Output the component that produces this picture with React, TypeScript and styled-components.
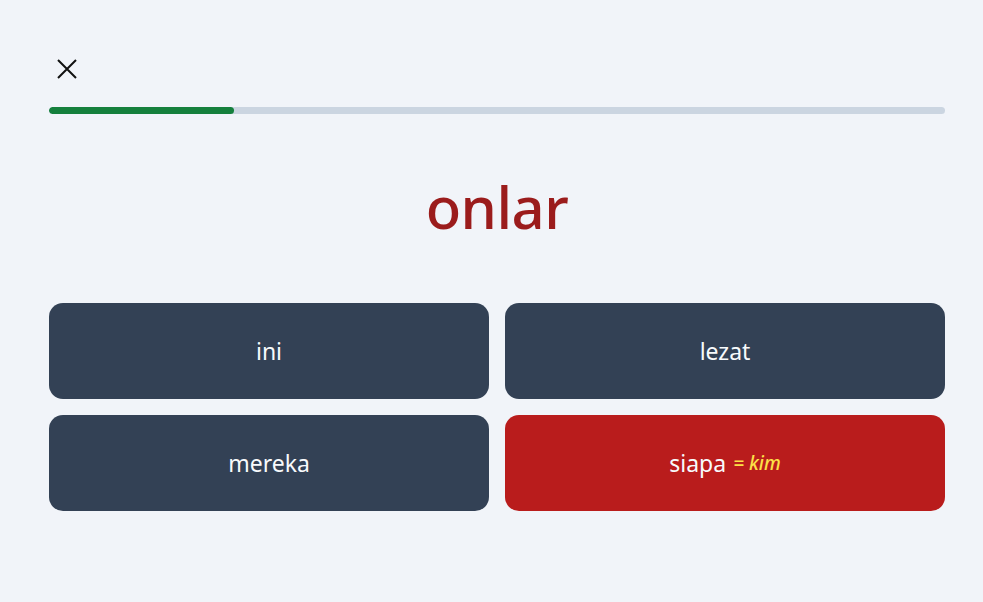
import React from "react";
import styled, { createGlobalStyle } from "styled-components";

const GlobalStyle = createGlobalStyle`
  html, body {
    margin: 0;
    padding: 0;
    background: #f1f4f9;
  }
  body {
    font-family: "Noto Sans", "Open Sans", sans-serif;
  }
`;

const Page = styled.main`
  width: 896px;
  padding: 51px 0 0 49px;
  box-sizing: content-box;
`;

const Header = styled.header`
  display: flex;
  align-items: center;
  height: 36px;
`;

const CloseButton = styled.button`
  width: 36px;
  height: 36px;
  padding: 0;
  border: none;
  background: transparent;
  display: flex;
  align-items: center;
  justify-content: center;
  cursor: pointer;
`;

const Track = styled.div`
  margin-top: 20px;
  height: 7px;
  border-radius: 4px;
  background: #cbd5e1;
  overflow: hidden;
`;

const Fill = styled.div`
  height: 100%;
  border-radius: 4px;
  background: #15803d;
`;

const Word = styled.h1`
  margin: 0;
  height: 189px;
  padding-bottom: 5px;
  box-sizing: border-box;
  display: flex;
  align-items: center;
  justify-content: center;
  font-size: 58px;
  font-weight: 500;
  color: #9b1c1c;
  letter-spacing: -0.5px;
`;

const Options = styled.div`
  display: grid;
  grid-template-columns: 1fr 1fr;
  gap: 16px;
`;

const Option = styled.button<{ $wrong?: boolean }>`
  height: 96px;
  border: none;
  border-radius: 14px;
  background: ${(p) => (p.$wrong ? "#b91c1c" : "#334155")};
  color: #f8fafc;
  font-family: inherit;
  font-size: 23px;
  display: flex;
  align-items: center;
  justify-content: center;
  gap: 7px;
  cursor: pointer;
`;

const Answer = styled.span`
  color: #fde047;
  font-style: italic;
  font-weight: 500;
  font-size: 19px;
`;

const options = [
  { label: "ini" },
  { label: "lezat" },
  { label: "mereka" },
  { label: "siapa", wrong: true, answer: "= kim" },
];

export default function App() {
  const progress = 185 / 896;
  return (
    <>
      <GlobalStyle />
      <Page>
        <Header>
          <CloseButton aria-label="close">
            <svg width="20" height="20" viewBox="0 0 20 20">
              <path d="M1 1 L19 19 M19 1 L1 19" stroke="#111" strokeWidth="2" />
            </svg>
          </CloseButton>
        </Header>
        <Track>
          <Fill style={{ width: `${progress * 100}%` }} />
        </Track>
        <Word>onlar</Word>
        <Options>
          {options.map((o) => (
            <Option key={o.label} $wrong={o.wrong}>
              {o.label}
              {o.answer && <Answer>{o.answer}</Answer>}
            </Option>
          ))}
        </Options>
      </Page>
    </>
  );
}
